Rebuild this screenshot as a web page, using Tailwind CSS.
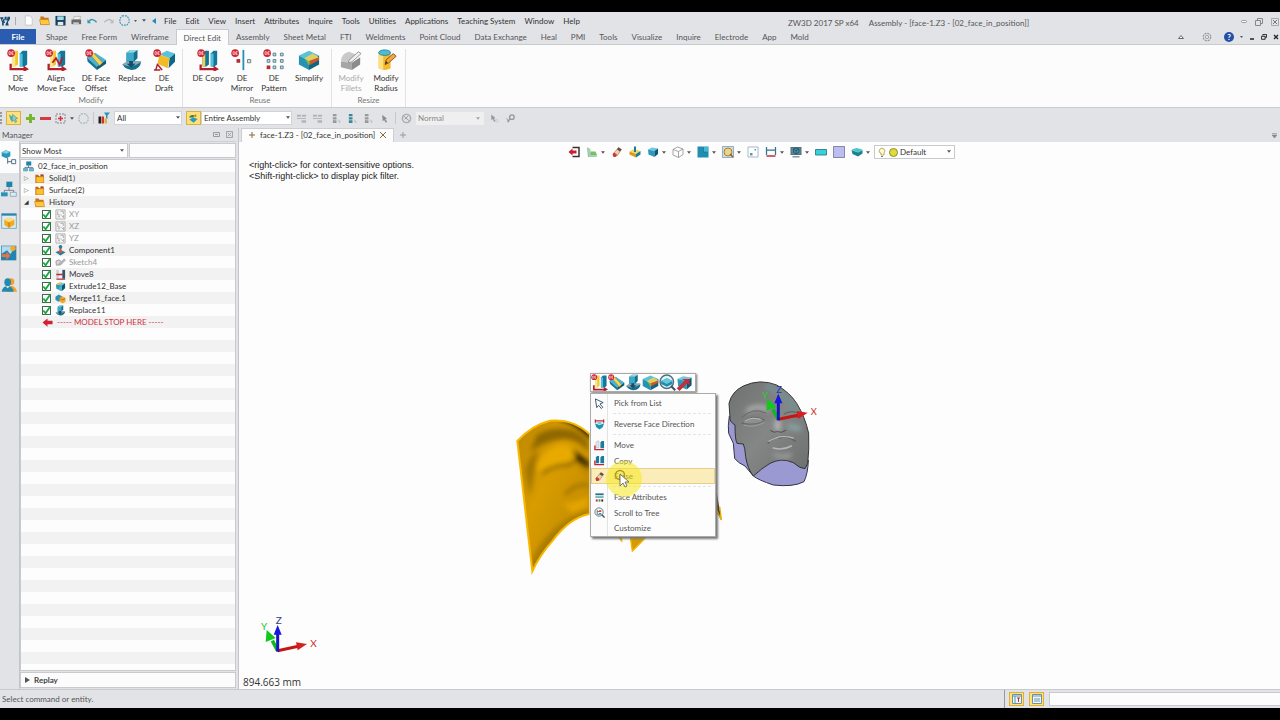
<!DOCTYPE html>
<html lang="en">
<head>
    <meta charset="UTF-8">
    <meta name="viewport" content="width=device-width, initial-scale=1.0">
    <title>ZW3D 2017 SP x64</title>
    <script src="https://cdn.jsdelivr.net/npm/@tailwindcss/browser@4"></script>
</head>
<body class="flex h-screen flex-col overflow-hidden bg-black py-3 font-['Lato',sans-serif] text-[8px] leading-[10px] text-[#333]">

    <!-- Icon set -->
    <svg class="hidden">
        <symbol id="de" viewBox="0 0 10 10"><circle cx="5" cy="5" r="4.6" fill="#cf2030"/><path d="M2.500 3.200v3.600h1q1.300 0 1.300-1.800T3.500 3.200zM8 3.200H6v3.600h2M6 5h1.700" fill="none" stroke="#fff" stroke-width=".8"/></symbol>
        <symbol id="bars" viewBox="0 0 24 24"><path d="M6 5l3-3h3v15l-3 2H6z" fill="#f4c531"/><path d="M6 5h3v14H6z" fill="#ffe68a"/><path d="M14 5l3-3h5v15l-3 2h-5z" fill="#15769b"/><path d="M14 5h3v14h-3z" fill="#4fc0da"/><path d="M4 16v6h14M3 22h16" fill="none" stroke="#b3202c" stroke-width="2.500"/><path d="M18 18l6 4-6 3z" fill="#b3202c"/></symbol>
        <symbol id="move" viewBox="0 0 24 24"><use href="#bars"/><use href="#de" x="0" y="0" width="9" height="9"/></symbol>
        <symbol id="align" viewBox="0 0 24 24"><use href="#bars"/><path d="M8 15l4-5 4 7 3-8" fill="none" stroke="#b3202c" stroke-width="2"/><use href="#de" width="9" height="9"/></symbol>
        <symbol id="copy" viewBox="0 0 24 24"><path d="M6 5l3-3h4v15l-3 2H6z" fill="#15769b"/><path d="M6 5h3v14H6z" fill="#f6d14d"/><path d="M15 5l3-3h4v15l-3 2h-4z" fill="#15769b"/><path d="M15 5h3v14h-3z" fill="#4fc0da"/><path d="M4 17v5h15" fill="none" stroke="#b3202c" stroke-width="2.500"/><path d="M18 18l6 4-6 3z" fill="#b3202c"/><use href="#de" width="9" height="9"/></symbol>
        <symbol id="offset" viewBox="0 0 24 24"><path d="M2 9l9-5 12 8-10 7z" fill="#48b4cf"/><path d="M2 9l11 10v4L3 14z" fill="#137596"/><path d="M13 19l10-7v4l-10 7z" fill="#0d5b79"/><path d="M5 5l4-1 10 11-3 3z" fill="#f8d354" stroke="#b58715" stroke-width=".6"/><use href="#de" width="9" height="9"/></symbol>
        <symbol id="replace" viewBox="0 0 24 24"><path d="M1 17l6-4h15l-4 6-7 4z" fill="#8aa9b5"/><path d="M2 17q9 5 20-3-1 8-10 9-8-1-10-6z" fill="#14708f"/><path d="M6 4l4-3h8v9l-4 4H6z" fill="#136e90"/><path d="M6 4h8v10H6z" fill="#3ca9c9"/><path d="M6 4l4-3h8l-4 3z" fill="#8fd6e6"/><path d="M9 13h4v3h3l-5 4-5-4h3z" fill="#164d63"/></symbol>
        <symbol id="draft" viewBox="0 0 24 24"><path d="M7 6l8-4 9 3-6 5z" fill="#59c3dc"/><path d="M18 10l6-5v9l-7 7z" fill="#0e6687"/><path d="M7 6l11 4-2 11-11-5z" fill="#f3ba28"/><path d="M5 16l-2 7M5 17l5 6M1 23h7" stroke="#b3202c" stroke-width="1.600" fill="none"/><use href="#de" width="9" height="9"/></symbol>
        <symbol id="mirror" viewBox="0 0 24 24"><path d="M13.500 1v22" stroke="#2593b5" stroke-width="2"/><path d="M6 11h4v4H6z" fill="#bd2836"/><path d="M18 11.500h3.500v3.500H18z" fill="#dfe5e8" stroke="#6d7c84"/><use href="#de" width="9" height="9"/></symbol>
        <symbol id="pattern" viewBox="0 0 24 24"><g fill="#b8dfe8" stroke="#4c7382" stroke-width=".9"><path d="M11 4.500h3v3h-3zM19 4.500h3v3h-3zM4.500 11.500h3v3h-3zM11 11.500h3v3h-3zM19 11.500h3v3h-3zM11 18.500h3v3h-3zM19 18.500h3v3h-3z"/></g><path d="M4 18h4v4H4z" fill="#bd2836"/><use href="#de" width="9" height="9"/></symbol>
        <symbol id="simplify" viewBox="0 0 24 24"><path d="M1 7l11-5 11 5-11 6z" fill="#5ac1d8"/><path d="M1 7l11 6v10L1 17z" fill="#2492b2"/><path d="M12 13l11-6v10l-11 6z" fill="#0e6584"/><path d="M7 10l9-5 7 4-10 6z" fill="#e0d063"/><path d="M12 13l11-4v3l-11 6z" fill="#d05728"/><path d="M7 10l6 4-1 4z" fill="#7abf4b"/></symbol>
        <symbol id="fillets" viewBox="0 0 24 24"><path d="M1 14q0-9 9-11l10 4q-6 2-7 8z" fill="#c9c9c9"/><path d="M1 14l12 1v8L1 20z" fill="#a5a5a5"/><path d="M13 15l9-6v8l-9 6z" fill="#8b8b8b"/><path d="M10 12l10-9 3 2L13 14l-4 1z" fill="#efefef" stroke="#858585" stroke-width=".9"/></symbol>
        <symbol id="radius" viewBox="0 0 24 24"><path d="M4 4v17q7 4 13 0V4z" fill="#f5b92b"/><path d="M4 4v17l5 2V5z" fill="#ffe080"/><ellipse cx="10.500" cy="4" rx="6.500" ry="3" fill="#4fbbd6" stroke="#1d83a3"/><path d="M11 17l1-5 8-7 3 3-8 7z" fill="#f6a63a" stroke="#704619" stroke-width=".9"/><path d="M11 17l1-4 2 2z" fill="#333"/></symbol>
        <symbol id="cube" viewBox="0 0 24 24"><path d="M2 7l8-4 12 2-7 5z" fill="#6cc9df"/><path d="M2 7l13 3v12L3 17z" fill="#2b9abb"/><path d="M15 10l7-5v11l-7 6z" fill="#0b5876"/></symbol>
        <symbol id="tree" viewBox="0 0 24 24"><path d="M7 1h11v9H7z" fill="#1c86a8"/><path d="M12 10v5M4 16v-2h17v2" stroke="#557" fill="none" stroke-width="1.600"/><path d="M1 16h9v6H1zM14 16h9v6h-9z" fill="#6fb9cf" stroke="#287e9d"/></symbol>
        <symbol id="folder" viewBox="0 0 24 24"><path d="M3 4h6l2 3h11v15H3z" fill="#c06a16"/><path d="M5 9h16v12H5z" fill="#fcbf2d"/><path d="M14 3h7v4h-7z" fill="#a74025"/></symbol>
        <symbol id="folder-open" viewBox="0 0 24 24"><path d="M3 3h7l2 3h9v15H3z" fill="#c87518"/><path d="M1 10h20l2 11H4z" fill="#fdc940" stroke="#b36713"/></symbol>
        <symbol id="check" viewBox="0 0 24 24"><path d="M5 12l5 6 9-13" fill="none" stroke="#1ea343" stroke-width="4"/></symbol>
        <symbol id="plane" viewBox="0 0 24 24"><path d="M2 2h20v20H2z" fill="#f5f5f5" stroke="#aaa" stroke-width="2"/><path d="M6 5v8h6M12 5h6v6M6 17h5M14 14l5 5v-6" fill="none" stroke="#a5a5a5" stroke-width="2"/></symbol>
        <symbol id="stamp" viewBox="0 0 24 24"><path d="M1 16l11-5 11 5-11 7z" fill="#1c7fa3"/><path d="M9 3h6l-1 9 4 3-6 3-6-3 4-3z" fill="#d3583c"/><circle cx="12" cy="4" r="4" fill="#237fa0"/></symbol>
        <symbol id="sketch" viewBox="0 0 24 24"><path d="M2 9q7-6 12 1T3 18z" fill="#d6d6d6" stroke="#9b9b9b" stroke-width="2"/><path d="M8 16L20 4l3 3-12 11z" fill="#bbb" stroke="#888"/></symbol>
        <symbol id="h-move" viewBox="0 0 24 24"><path d="M3 2h5v18H3z" fill="#c4cdd2"/><path d="M16 2h6v19h-6z" fill="#27586d"/><path d="M3 12h14M3 22h19" stroke="#be2735" stroke-width="3"/></symbol>
        <symbol id="extrude" viewBox="0 0 24 24"><use href="#cube"/><path d="M2 7l8-4 5 1-8 5z" fill="#f4bd33"/><path d="M9 13l6-2v11l-6-2z" fill="#47b5cf"/></symbol>
        <symbol id="merge" viewBox="0 0 24 24"><path d="M1 8l7-5 7 4v8l-7 4-7-4z" fill="#2993b3"/><path d="M10 11l6-4 7 4v8l-6 4-7-4z" fill="#f0a929"/><path d="M12 13l5 2 5-3" stroke="#9d5b15" fill="none" stroke-width="1.500"/></symbol>
        <symbol id="stop" viewBox="0 0 24 24"><path d="M1 12L12 3v5h11v8H12v5z" fill="#d41f35"/></symbol>
        <symbol id="eraser" viewBox="0 0 24 24"><path d="M5 15L15 3l6 4-9 13H7z" fill="#f0cfa6" stroke="#8a532e"/><path d="M3 17l3-4 6 4-3 5H5z" fill="#c63b3b"/><path d="M15 3l6 4-3 4-6-4z" fill="#5a4c49"/></symbol>
        <symbol id="zoomface" viewBox="0 0 24 24"><circle cx="11" cy="11" r="9.500" fill="#e1f2f7" stroke="#50707f" stroke-width="2"/><path d="M3 10l8-4 8 4v4l-8 4-8-4z" fill="#208bab"/><path d="M3 10l8-4 8 4-8 4z" fill="#65c8dd"/><path d="M17 17l6 6" stroke="#3d5664" stroke-width="3"/></symbol>
        <symbol id="facearrow" viewBox="0 0 24 24"><use href="#cube"/><path d="M1 20L12 10 9 7h10v9l-3-3L5 24z" fill="#c52d3b"/></symbol>
        <symbol id="cursor" viewBox="0 0 24 24"><path d="M3 2l17 8-7 3 6 7-3 3-6-7-4 5z" fill="#fff" stroke="#2d4e66" stroke-width="2"/></symbol>
        <symbol id="reverse" viewBox="0 0 24 24"><path d="M3 1v7M21 1v7M3 4h18" stroke="#c42d39" stroke-width="3"/><path d="M2 9l10 4 10-4-3 9-7 5-7-5z" fill="#2092b4"/><path d="M5 8l7-2 7 2-7 4z" fill="#79cadd"/></symbol>
        <symbol id="m-move" viewBox="0 0 24 24"><path d="M4 5l3-3h4v15H4z" fill="#dce3e8" stroke="#999" stroke-width=".7"/><path d="M14 5l3-3h5v16h-8z" fill="#1c7b9e"/><path d="M2 12v9h20" fill="none" stroke="#be2735" stroke-width="3"/></symbol>
        <symbol id="m-copy" viewBox="0 0 24 24"><path d="M4 5l3-3h4v16H4z" fill="#1c7b9e"/><path d="M14 5l3-3h5v16h-8z" fill="#1c7b9e"/><path d="M2 12v9h20" fill="none" stroke="#be2735" stroke-width="3"/></symbol>
        <symbol id="attrs" viewBox="0 0 24 24"><path d="M3 3h18v4H3z" fill="#2d728d"/><path d="M3 9h18v4H3z" fill="#76b2c3"/><path d="M4 16h4v5H4z" fill="#c33"/><path d="M10 16h4v5h-4z" fill="#3a9b48"/><path d="M16 16h4v5h-4z" fill="#333"/></symbol>
        <symbol id="treezoom" viewBox="0 0 24 24"><circle cx="11" cy="11" r="9" fill="#fff" stroke="#5d6c75" stroke-width="2"/><path d="M7 6v10h4M7 10h4" stroke="#5d6c75" stroke-width="2" fill="none"/><path d="M11 7h5v4h-5z" fill="#c74949"/><path d="M11 13h5v4h-5z" fill="#3b95b1"/><path d="M17 17l6 6" stroke="#3d5664" stroke-width="3"/></symbol>
        <symbol id="dashring" viewBox="0 0 24 24"><path d="M7 2h10l5 6v8l-5 6H7l-5-6V8z" fill="none" stroke="currentColor" stroke-width="2.500" stroke-dasharray="4 2"/></symbol>
        <symbol id="caret" viewBox="0 0 6 4"><path d="M0 0h6L3 4z" fill="#555"/></symbol>
        <symbol id="list" viewBox="0 0 24 24"><path d="M4 2h8v5H4zM4 9h8v5H4zM4 16h8v6H4z" fill="currentColor"/><path d="M15 13l7 7-3 0-1 3z" fill="#bbb"/></symbol>
        <symbol id="grid" viewBox="0 0 24 24"><path d="M2 4h9v4H2zM13 4h9v4h-9zM2 11h20v2H2zM12 16h10v5H12z" fill="#b4b5b8"/></symbol>
        <symbol id="triad" viewBox="-55 -110 180 120" overflow="visible">
            <path d="M0 0l-16-30" stroke="#0fb81c" stroke-width="11"/><path d="M-33-62l-3 36 30-12z" fill="#0fc91c"/>
            <path d="M0 0l62-13" stroke="#c41616" stroke-width="9"/><path d="M88-20L55-25l5 24z" fill="#d81f1f"/>
            <path d="M0 3v-54" stroke="#1414c4" stroke-width="9"/><path d="M0-77l-12 29h24z" fill="#1717e0"/>
        </symbol>
    </svg>

    <div class="flex min-h-0 flex-1 flex-col bg-[#e2e3e7]">

        <!-- Title bar -->
        <header class="flex h-[17px] shrink-0 items-center">
            <div class="flex w-[164px] items-center gap-[5px]">
                <svg class="size-[10px]" viewBox="0 0 24 24" aria-label="ZW3D"><path d="M0 3h8v4H4l5 9v7H5V15zM11 2h5v5h-5zM18 2h6v5l-5 8 2 8h-8l1-5 4-8h-8l2 7H8L6 8h11z" fill="#174d75"/></svg>
                <span class="h-2 w-px bg-[#aaa]"></span>
                <button aria-label="New" class="ml-[2px]"><svg class="size-[11px]" viewBox="0 0 24 24"><path d="M5 2h10l5 5v15H5z" fill="#fff" stroke="#bbb" stroke-width="1.500"/></svg></button>
                <button aria-label="Open"><svg class="size-[11px]"><use href="#folder-open"/></svg></button>
                <button aria-label="Save"><svg class="size-[11px]" viewBox="0 0 24 24"><path d="M1 2h22v21H1z" fill="#1c3f59"/><path d="M5 3h14v8H5z" fill="#9fdceb"/><path d="M6 15h12v7H6z" fill="#e1eaee"/></svg></button>
                <button aria-label="Print"><svg class="size-[11px]" viewBox="0 0 24 24"><path d="M7 3h14l-2 7H5z" fill="#eee" stroke="#888"/><path d="M1 10h21v10H1z" fill="#686868"/><path d="M5 16h12v5H5z" fill="#ccc"/></svg></button>
                <button aria-label="Undo"><svg class="size-[11px]" viewBox="0 0 24 24"><path d="M4 14q7-9 17 2" fill="none" stroke="#3996b3" stroke-width="3"/><path d="M1 9v9h8z" fill="#3996b3"/></svg></button>
                <button aria-label="Redo"><svg class="size-[11px]" viewBox="0 0 24 24"><path d="M3 16q10-11 17-2" fill="none" stroke="#b8babd" stroke-width="3"/><path d="M23 9v9h-8z" fill="#b8babd"/></svg></button>
                <button aria-label="Regenerate" class="flex items-center gap-1 text-[#4096b5]"><svg class="size-[11px]"><use href="#dashring"/></svg><svg class="h-[2px] w-[3px]"><use href="#caret"/></svg></button>
                <button aria-label="More"><svg class="h-[3px] w-1"><use href="#caret"/></svg></button>
                <button aria-label="Collapse"><svg class="size-[6px]" viewBox="0 0 6 6"><path d="M5 0v6L1 3z" fill="#2689bd"/></svg></button>
            </div>
            <nav class="flex flex-1 gap-[9px] whitespace-nowrap">
                <a href="#">File</a><a href="#">Edit</a><a href="#">View</a><a href="#">Insert</a><a href="#">Attributes</a><a href="#">Inquire</a><a href="#">Tools</a><a href="#">Utilities</a><a href="#">Applications</a><a href="#">Teaching System</a><a href="#">Window</a><a href="#">Help</a>
            </nav>
            <div class="flex w-[492px] items-center gap-[10px] whitespace-nowrap pt-1 text-[#555]">
                <span>ZW3D 2017 SP x64</span><span class="flex-1">Assembly - [face-1.Z3 - [02_face_in_position]]</span>
                <div class="flex items-center gap-2 pr-px pb-[2px]">
                    <button aria-label="Minimize"><svg class="h-[3px] w-[6px]" viewBox="0 0 6 3"><rect x=".5" y=".5" width="5" height="2" rx="1" fill="#fff" stroke="#999"/></svg></button>
                    <button aria-label="Restore"><svg class="size-2" viewBox="0 0 8 8"><path d="M2.500 2V.5h5v5H6M.5 2.500h5v5h-5z" fill="none" stroke="#888"/></svg></button>
                    <button aria-label="Close"><svg class="size-2" viewBox="0 0 8 8"><path d="M.5.5h7v7h-7z" fill="none" stroke="#aaa"/><path d="M2 2l4 4M6 2L2 6" stroke="#777"/></svg></button>
                </div>
            </div>
        </header>

        <!-- Ribbon tabs -->
        <div class="flex h-4 shrink-0 items-stretch border-b border-[#c9cacc] text-[#555]">
            <nav class="flex flex-1 items-stretch whitespace-nowrap [&>a]:flex [&>a]:items-center [&>a]:px-[7px]">
                <a href="#" class="mr-[3px] w-9 justify-center bg-[#2a5caf] font-bold text-white">File</a>
                <a href="#">Shape</a><a href="#">Free Form</a><a href="#">Wireframe</a>
                <a href="#" class="-mb-px border-x border-t border-[#c9cacc] bg-[#fcfcfc]">Direct Edit</a>
                <a href="#">Assembly</a><a href="#">Sheet Metal</a><a href="#">FTI</a><a href="#">Weldments</a><a href="#">Point Cloud</a><a href="#">Data Exchange</a><a href="#">Heal</a><a href="#">PMI</a><a href="#">Tools</a><a href="#">Visualize</a><a href="#">Inquire</a><a href="#">Electrode</a><a href="#">App</a><a href="#">Mold</a>
            </nav>
            <div class="flex items-center gap-[6px] pr-px">
                <button aria-label="Collapse ribbon" class="mr-3"><svg class="h-1 w-[6px]" viewBox="0 0 6 4"><path d="M.5 3.500L3 .5l2.500 3z" fill="#fff" stroke="#666"/></svg></button>
                <button aria-label="Settings" class="mr-[6px]"><svg class="size-[10px]" viewBox="0 0 24 24"><circle cx="12" cy="12" r="9" fill="none" stroke="#999" stroke-width="3" stroke-dasharray="5 2"/><circle cx="12" cy="12" r="4" fill="none" stroke="#999" stroke-width="2"/></svg></button>
                <button aria-label="Help" class="flex size-[10px] items-center justify-center rounded-full bg-[#2450a6] font-bold text-white">?</button>
                <svg class="h-[2px] w-[3px]"><use href="#caret"/></svg>
                <button aria-label="Minimize document"><svg class="size-[6px]" viewBox="0 0 6 6"><path d="M1 5h4" stroke="#222" stroke-width="1.500"/></svg></button>
                <button aria-label="Restore document"><svg class="size-[6px]" viewBox="0 0 8 8"><path d="M2.500 2V.5h5v4H6M.5 3h5v4h-5z" fill="none" stroke="#222" stroke-width="1.300"/></svg></button>
                <button aria-label="Close document"><svg class="size-[6px]" viewBox="0 0 6 6"><path d="M1 1l4 4M5 1L1 5" stroke="#222" stroke-width="1.300"/></svg></button>
            </div>
        </div>

        <!-- Ribbon -->
        <div class="flex h-[63px] shrink-0 border-b border-[#cbccce] bg-[#fcfcfc] pt-1 text-center [&_button]:flex [&_button]:flex-col [&_button]:items-center [&_button]:gap-[2px] [&_button]:whitespace-nowrap [&_svg]:size-[22px]">
            <section class="flex w-[183px] flex-col justify-between border-r border-[#e2e2e2] pb-[2px]">
                <div class="grid grid-cols-[36px_40px_40px_32px_32px]">
                    <button><svg><use href="#move"/></svg><span>DE<br>Move</span></button>
                    <button><svg><use href="#align"/></svg><span>Align<br>Move Face</span></button>
                    <button><svg><use href="#offset"/></svg><span>DE Face<br>Offset</span></button>
                    <button><svg><use href="#replace"/></svg><span>Replace</span></button>
                    <button><svg><use href="#draft"/></svg><span>DE<br>Draft</span></button>
                </div>
                <h2 class="text-[#777]">Modify</h2>
            </section>
            <section class="flex w-[149px] flex-col justify-between border-r border-[#e2e2e2] pb-[2px] pl-[6px]">
                <div class="grid grid-cols-[38px_30px_34px_36px]">
                    <button><svg><use href="#copy"/></svg><span>DE Copy</span></button>
                    <button><svg><use href="#mirror"/></svg><span>DE<br>Mirror</span></button>
                    <button><svg><use href="#pattern"/></svg><span>DE<br>Pattern</span></button>
                    <button><svg><use href="#simplify"/></svg><span>Simplify</span></button>
                </div>
                <h2 class="text-[#777]">Reuse</h2>
            </section>
            <section class="flex w-[74px] flex-col justify-between border-r border-[#e2e2e2] pb-[2px]">
                <div class="grid grid-cols-[38px_32px]">
                    <button class="text-[#aaa]"><svg><use href="#fillets"/></svg><span>Modify<br>Fillets</span></button>
                    <button><svg><use href="#radius"/></svg><span>Modify<br>Radius</span></button>
                </div>
                <h2 class="text-[#777]">Resize</h2>
            </section>
        </div>

        <!-- Selection toolbar -->
        <div class="flex h-[20px] shrink-0 items-center gap-1">
            <span class="h-3 border-l-2 border-dotted border-[#999]"></span>
            <button aria-label="Pick" class="flex h-[14px] w-[15px] items-center justify-center border border-[#d9b23b] bg-[#ffe07a]"><svg class="size-[11px]" viewBox="0 0 24 24"><path d="M2 3l9 6-4 10z" fill="#45aabb"/><path d="M10 3l11 9-5 1 3 6-3 2-3-6-4 4z" fill="#8fcfc8" stroke="#4d9a8d" stroke-width="1.500"/></svg></button>
            <button aria-label="Add"><svg class="size-[11px]" viewBox="0 0 11 11"><path d="M5.500 1v9M1 5.500h9" stroke="#79b52d" stroke-width="3"/></svg></button>
            <button aria-label="Remove"><svg class="size-[11px]" viewBox="0 0 11 11"><path d="M0 5.500h11" stroke="#d23b44" stroke-width="3"/></svg></button>
            <button aria-label="Pick region" class="flex items-center gap-1"><svg class="size-[11px]" viewBox="0 0 11 11"><path d="M1 1h9v9H1z" fill="none" stroke="#888" stroke-dasharray="2 1"/><path d="M5.500 3v5M3 5.500h5" stroke="#cf3341" stroke-width="1.500"/></svg><svg class="h-[3px] w-1"><use href="#caret"/></svg></button>
            <button aria-label="Loop" class="text-[#a3b4ba]"><svg class="size-[11px]"><use href="#dashring"/></svg></button>
            <span class="h-3 w-px bg-[#c6c7ca]"></span>
            <button aria-label="Filter"><svg class="size-[12px]" viewBox="0 0 24 24"><path d="M1 9h5v14H1z" fill="#222"/><path d="M7 9h5v14H7z" fill="#c73929"/><path d="M13 13h5v10h-5z" fill="#e5b13a"/><path d="M12 1h12l-5 6v7l-3-2V7z" fill="#2c94b8"/></svg></button>
            <div class="relative w-[68px]"><select aria-label="Filter type" class="block h-[14px] w-full appearance-none border border-[#d2d3d6] bg-white px-[2px] leading-3"><option>All</option></select><svg class="pointer-events-none absolute top-[5px] right-[2px] h-[3px] w-1"><use href="#caret"/></svg></div>
            <button aria-label="Scope" class="flex h-[14px] w-[15px] items-center justify-center border border-[#d9b23b] bg-[#ffe07a]"><svg class="size-[11px]" viewBox="0 0 24 24"><path d="M3 14l8-4 10 3-9 8z" fill="#2b9aba"/><path d="M2 10q2-8 12-5l-2 5z" fill="#337d57"/><path d="M18 2v8l-7-4z" fill="#cf8321"/></svg></button>
            <div class="relative -ml-1 w-[91px]"><select aria-label="Pick scope" class="block h-[14px] w-full appearance-none border border-[#d2d3d6] bg-white px-[2px] leading-3"><option>Entire Assembly</option></select><svg class="pointer-events-none absolute top-[5px] right-[2px] h-[3px] w-1"><use href="#caret"/></svg></div>
            <div class="flex items-center gap-[5px]">
                <svg class="size-[11px]"><use href="#grid"/></svg>
                <svg class="mr-[3px] size-[11px]"><use href="#grid"/></svg>
                <svg class="size-[11px] text-[#999]"><use href="#list"/></svg>
                <svg class="size-[11px] text-[#3a8998]"><use href="#list"/></svg>
                <svg class="size-[11px] text-[#999]"><use href="#list"/></svg>
                <svg class="size-[11px]" viewBox="0 0 24 24"><path d="M7 4l10 8-3 2 4 5-3 2-4-6-3 3z" fill="#8b8c8e"/></svg>
                <span class="h-3 w-px bg-[#c6c7ca]"></span>
                <svg class="size-[11px]" viewBox="0 0 24 24"><circle cx="12" cy="12" r="9" fill="none" stroke="#aaa" stroke-width="3"/><path d="M5 6l14 12M8 14l8-8" stroke="#999" stroke-width="2"/></svg>
                <div class="relative -ml-px w-[68px]"><select aria-label="Mode" disabled class="block h-[13px] w-full appearance-none bg-[#efeff0] px-[2px] leading-3 text-[#888]"><option>Normal</option></select><svg class="pointer-events-none absolute top-[5px] right-1 h-[3px] w-1 opacity-50"><use href="#caret"/></svg></div>
                <svg class="size-[11px]" viewBox="0 0 24 24"><path d="M5 3l9 8-3 1 3 6-3 1-3-6-3 3z" fill="#999"/><circle cx="17" cy="17" r="3" fill="#ddd" stroke="#bbb"/></svg>
                <svg class="size-[11px]" viewBox="0 0 24 24"><path d="M2 10l7 5-2 6z" fill="#aaa"/><circle cx="15" cy="9" r="5" fill="none" stroke="#999" stroke-width="3"/><path d="M11 13l-5 7" stroke="#999" stroke-width="3"/></svg>
            </div>
        </div>

        <div class="flex min-h-0 flex-1">

            <!-- Manager panel -->
            <aside class="flex w-[236px] shrink-0 flex-col">
                <div class="flex h-[14px] shrink-0 items-center gap-[6px] border-b border-[#cfd0d3] pr-[3px] pl-[2px]">
                    <h2 class="flex-1 text-[#555]">Manager</h2>
                    <button aria-label="Pin"><svg class="h-[5px] w-[7px]" viewBox="0 0 7 5"><path d="M.5.5h6v4h-6zM2 2.500h3" fill="none" stroke="#999"/></svg></button>
                    <button aria-label="Close panel"><svg class="size-[7px]" viewBox="0 0 8 8"><path d="M.5.5h7v7h-7zM2 2l4 4M6 2L2 6" fill="none" stroke="#999"/></svg></button>
                </div>
                <div class="flex min-h-0 flex-1">
                    <nav class="flex w-[19px] shrink-0 flex-col [&>button]:flex [&>button]:h-8 [&>button]:items-center [&>button]:pl-px">
                        <button aria-label="History" class="-mt-px bg-[#fcfcfc]"><svg class="size-4" viewBox="0 0 24 24"><path d="M1 5l6-3 7 2v7l-6 3-7-3z" fill="#2798bb"/><path d="M1 5l6-3 7 2-6 3z" fill="#83d2e4"/><path d="M10 13v9M10 19h6" fill="none" stroke="#526f80" stroke-width="1.500"/><path d="M16 16h6v6h-6z" fill="#fff" stroke="#526f80" stroke-width="1.500"/></svg></button>
                        <button aria-label="Assembly tree"><svg class="size-4" viewBox="0 0 24 24"><path d="M8 1h9v8H8z" fill="#1c86a8"/><path d="M12 9v5M5 17v-3h14v3" stroke="#557" fill="none"/><path d="M0 17h10v6H0z" fill="#2496b8"/><path d="M14 17h9v6h-9z" fill="#dcecf2" stroke="#6a99ad"/></svg></button>
                        <button aria-label="View manager"><svg class="size-4" viewBox="0 0 24 24"><path d="M1 1h22v22H1z" fill="#dcecf5" stroke="#4c8eb1"/><path d="M1 1h22v3H1z" fill="#2d83ad"/><path d="M5 10l7-3 8 3v8l-8 4-7-4z" fill="#f3a91f"/><path d="M5 10l7-3 8 3-8 4z" fill="#ffdf7b"/><path d="M12 14v8" stroke="#9d6111"/></svg></button>
                        <button aria-label="Visual manager"><svg class="size-4" viewBox="0 0 24 24"><path d="M0 1h23v22H0z" fill="#2583b3"/><path d="M1 2h21l-8 12-5-6-8 5z" fill="#b5dbeb"/><circle cx="18" cy="5" r="4" fill="#f4a824"/><path d="M1 14h7v-4l6 6-6 6v-4H1z" fill="#e77542"/></svg></button>
                        <button aria-label="Roles"><svg class="size-4" viewBox="0 0 24 24"><circle cx="15" cy="7" r="5" fill="#f0a323"/><path d="M9 22q0-8 7-9 7 2 8 9z" fill="#f0a323"/><ellipse cx="10" cy="8" rx="5" ry="6" fill="#2389b0"/><path d="M1 22q1-6 6-8h6q5 2 6 8z" fill="#2389b0"/><path d="M7 14l3 3 3-3z" fill="#eee"/></svg></button>
                    </nav>
                    <div class="flex min-w-0 flex-1 flex-col border-l border-[#c4c5c8]">
                        <div class="flex h-[17px] shrink-0 items-center gap-px">
                            <div class="relative w-[108px]"><select aria-label="Show" class="block h-[15px] w-full appearance-none border border-[#c9cacd] bg-white px-px leading-3"><option>Show Most</option></select><svg class="pointer-events-none absolute top-[6px] right-1 h-[3px] w-1"><use href="#caret"/></svg></div>
                            <input aria-label="Search" class="h-[15px] min-w-0 flex-1 border border-[#c9cacd] bg-[#fcfcfc]">
                        </div>
                        <ul class="min-h-0 flex-1 overflow-hidden border border-[#c9cacd] bg-[repeating-linear-gradient(#fdfdfd_0_12px,#f2f2f3_12px_24px)] whitespace-nowrap [&_li]:flex [&_li]:h-3 [&_li]:items-center [&_svg]:size-[11px] [&_svg]:shrink-0">
                            <li class="gap-1 pl-[2px]"><svg><use href="#tree"/></svg>02_face_in_position</li>
                            <li class="gap-1 pl-[3px]"><span class="w-[6px] text-[6px] text-[#666]">▷</span><svg><use href="#folder"/></svg>Solid(1)</li>
                            <li class="gap-1 pl-[3px]"><span class="w-[6px] text-[6px] text-[#666]">▷</span><svg><use href="#folder"/></svg>Surface(2)</li>
                            <li class="gap-1 pl-[3px]"><span class="w-[6px] text-[6px]">◢</span><svg><use href="#folder-open"/></svg>History</li>
                            <li class="gap-[3px] pl-[21px] text-[#999]"><label class="contents"><input type="checkbox" checked class="peer sr-only"><span class="flex size-[9px] items-center justify-center border border-[#3f6b4a] bg-white"><svg><use href="#check"/></svg></span><svg class="ml-px"><use href="#plane"/></svg>XY</label></li>
                            <li class="gap-[3px] pl-[21px] text-[#999]"><label class="contents"><input type="checkbox" checked class="peer sr-only"><span class="flex size-[9px] items-center justify-center border border-[#3f6b4a] bg-white"><svg><use href="#check"/></svg></span><svg class="ml-px"><use href="#plane"/></svg>XZ</label></li>
                            <li class="gap-[3px] pl-[21px] text-[#999]"><label class="contents"><input type="checkbox" checked class="peer sr-only"><span class="flex size-[9px] items-center justify-center border border-[#3f6b4a] bg-white"><svg><use href="#check"/></svg></span><svg class="ml-px"><use href="#plane"/></svg>YZ</label></li>
                            <li class="gap-[3px] pl-[21px]"><label class="contents"><input type="checkbox" checked class="peer sr-only"><span class="flex size-[9px] items-center justify-center border border-[#3f6b4a] bg-white"><svg><use href="#check"/></svg></span><svg class="ml-px"><use href="#stamp"/></svg>Component1</label></li>
                            <li class="gap-[3px] pl-[21px] text-[#999]"><label class="contents"><input type="checkbox" checked class="peer sr-only"><span class="flex size-[9px] items-center justify-center border border-[#3f6b4a] bg-white"><svg><use href="#check"/></svg></span><svg class="ml-px"><use href="#sketch"/></svg>Sketch4</label></li>
                            <li class="gap-[3px] pl-[21px]"><label class="contents"><input type="checkbox" checked class="peer sr-only"><span class="flex size-[9px] items-center justify-center border border-[#3f6b4a] bg-white"><svg><use href="#check"/></svg></span><svg class="ml-px"><use href="#h-move"/></svg>Move8</label></li>
                            <li class="gap-[3px] pl-[21px]"><label class="contents"><input type="checkbox" checked class="peer sr-only"><span class="flex size-[9px] items-center justify-center border border-[#3f6b4a] bg-white"><svg><use href="#check"/></svg></span><svg class="ml-px"><use href="#extrude"/></svg>Extrude12_Base</label></li>
                            <li class="gap-[3px] pl-[21px]"><label class="contents"><input type="checkbox" checked class="peer sr-only"><span class="flex size-[9px] items-center justify-center border border-[#3f6b4a] bg-white"><svg><use href="#check"/></svg></span><svg class="ml-px"><use href="#merge"/></svg>Merge11_face.1</label></li>
                            <li class="gap-[3px] pl-[21px]"><label class="contents"><input type="checkbox" checked class="peer sr-only"><span class="flex size-[9px] items-center justify-center border border-[#3f6b4a] bg-white"><svg><use href="#check"/></svg></span><svg class="ml-px"><use href="#replace"/></svg>Replace11</label></li>
                            <li class="gap-1 pl-[21px] text-[#cf3342]"><svg><use href="#stop"/></svg>----- MODEL STOP HERE -----</li>
                        </ul>
                        <button class="mt-px mb-px flex h-4 shrink-0 items-center gap-1 border border-[#c9cacd] bg-[#fcfcfc] pl-1 font-bold text-[#444]"><svg class="h-[6px] w-[5px]" viewBox="0 0 5 6"><path d="M0 0l5 3-5 3z" fill="#555"/></svg>Replay</button>
                    </div>
                </div>
            </aside>

            <!-- Document area -->
            <main class="ml-[2px] flex min-w-0 flex-1 flex-col border-l border-[#c4c5c8]">
                <div class="flex h-[14px] shrink-0 items-center pl-[2px]">
                    <div class="flex h-full items-center gap-[5px] border-x border-t border-[#cdced1] bg-[#fcfcfc] px-[7px] pb-px whitespace-nowrap">
                        <svg class="size-[6px]" viewBox="0 0 6 6"><path d="M3 0v6M0 3h6" stroke="#8a6a3c"/></svg>
                        <span>face-1.Z3 - [02_face_in_position]</span>
                        <button aria-label="Close tab"><svg class="size-[6px]" viewBox="0 0 6 6"><path d="M0 0l6 6M6 0L0 6" stroke="#8a6a3c"/></svg></button>
                    </div>
                    <button aria-label="New tab" class="ml-[6px] flex-1"><svg class="size-[6px]" viewBox="0 0 6 6"><path d="M3 0v6M0 3h6" stroke="#999"/></svg></button>
                    <button aria-label="Tab list" class="pr-[3px]"><svg class="size-[5px]" viewBox="0 0 5 5"><path d="M0 .5h5M0 2h5L2.500 5z" fill="#888" stroke="#888" stroke-width=".6"/></svg></button>
                </div>

                <div class="relative min-h-0 flex-1 overflow-hidden bg-[#fdfdfd]">
                    <!-- View toolbar -->
                    <div class="flex items-center gap-[6px] pt-[3px] pl-[329px] [&>svg]:size-[12px] [&>span]:flex [&>span]:items-center [&>span]:gap-[3px]">
                        <svg viewBox="0 0 24 24"><path d="M9 3h13v18H9" fill="#fff" stroke="#333" stroke-width="3"/><path d="M1 12l8-7v4h8v6H9v4z" fill="#c71f31"/></svg>
                        <span><svg class="size-[12px]" viewBox="0 0 24 24"><path d="M2 3l5 2v14h14v3H4z" fill="#9aaeb6"/><path d="M2 3l7 4v6l12 3v6H6z" fill="#9ed3b4"/><path d="M9 11h10l3 7H9z" fill="#7ebd62"/></svg><svg class="h-[3px] w-1"><use href="#caret"/></svg></span>
                        <svg><use href="#eraser"/></svg>
                        <svg viewBox="0 0 24 24"><path d="M1 11l9-5 13 4-9 6z" fill="#f3d65b"/><path d="M1 11l13 5v7L1 17z" fill="#d69a20"/><path d="M14 16l9-6v7l-9 6z" fill="#197c9f"/><path d="M12 1v11" stroke="#197c9f" stroke-width="4"/></svg>
                        <span><svg class="size-[12px]"><use href="#cube"/></svg><svg class="h-[3px] w-1"><use href="#caret"/></svg></span>
                        <span><svg class="size-[12px]" viewBox="0 0 24 24"><path d="M2 7l9-5 11 4v11l-9 6-11-5zM2 7l11 4 9-5M13 11v12" fill="none" stroke="#888" stroke-width="1.500"/></svg><svg class="h-[3px] w-1"><use href="#caret"/></svg></span>
                        <span><svg class="size-[12px]" viewBox="0 0 24 24"><path d="M1 1h22v22H1z" fill="#1f8eb1"/><path d="M13 2h9v10h-9z" fill="#43b9d4"/><path d="M13 2v10h9" fill="none" stroke="#116784"/></svg><svg class="h-[3px] w-1"><use href="#caret"/></svg></span>
                        <span><svg class="size-[12px]" viewBox="0 0 24 24"><path d="M1 1h22v22H1z" fill="#cfdde2" stroke="#7c99a5" stroke-width="1.500"/><circle cx="12" cy="12" r="8" fill="#ecd28d" stroke="#a8843f" stroke-width="2"/><path d="M16 16l6 6" stroke="#955c27" stroke-width="3"/></svg><svg class="h-[3px] w-1"><use href="#caret"/></svg></span>
                        <svg viewBox="0 0 24 24"><path d="M2 2h20v20H2z" fill="#fff" stroke="#86a6b2" stroke-width="1.500"/><path d="M6 14h5v5H6zM15 6h3v3h-3z" fill="#5c97ac"/></svg>
                        <span><svg class="size-[12px]" viewBox="0 0 24 24"><path d="M3 2v16M21 2v16M3 8h18" fill="none" stroke="#34748c" stroke-width="2.500"/><path d="M3 20h18" stroke="#c72b3c" stroke-width="3"/></svg><svg class="h-[3px] w-1"><use href="#caret"/></svg></span>
                        <span><svg class="size-[12px]" viewBox="0 0 24 24"><path d="M1 2h22v16H1z" fill="#526e7b"/><path d="M3 4h18v12H3z" fill="#62899a"/><path d="M5 20h14v3H5z" fill="#8a9398"/><path d="M7 6l5-2 6 2v7l-6 3-5-3zM7 6l5 3 6-3M12 9v7" fill="#3491b1" stroke="#244d61" stroke-width="1.500"/></svg><svg class="h-[3px] w-1"><use href="#caret"/></svg></span>
                        <svg viewBox="0 0 24 24"><path d="M1 7h22v11H1z" fill="#31d3df" stroke="#27616f" stroke-width="1.500"/></svg>
                        <svg viewBox="0 0 24 24"><path d="M1 1h22v22H1z" fill="#bdbcf3" stroke="#696987" stroke-width="1.500"/></svg>
                        <span><svg class="size-[12px]" viewBox="0 0 24 24"><path d="M1 7l10-3 12 3-9 6z" fill="#49c4cb"/><path d="M1 8l13 5 9-5v7l-9 6-11-5z" fill="#16858f"/></svg><svg class="h-[3px] w-1"><use href="#caret"/></svg></span>
                        <div class="relative -ml-[2px] w-[81px]">
                            <select aria-label="Layer" class="block h-[14px] w-full appearance-none border border-[#c9cacd] bg-white pl-[25px] leading-3"><option>Default</option></select>
                            <svg class="pointer-events-none absolute top-[2px] left-1 h-[10px] w-5" viewBox="0 0 20 10"><path d="M2 6Q0 4 2 2t4 0 0 4v2H3V6z" fill="#fffbd0" stroke="#a79b46" stroke-width=".8"/><path d="M3 9.500h2" stroke="#777"/><circle cx="15.500" cy="5.500" r="4" fill="#dfdc35" stroke="#8b8b33"/></svg>
                            <svg class="pointer-events-none absolute top-[5px] right-1 h-[3px] w-1"><use href="#caret"/></svg>
                        </div>
                    </div>

                    <p class="pt-px pl-[10px] font-['Liberation_Sans',sans-serif] text-[9px] leading-[11px] text-[#222]">&lt;right-click&gt; for context-sensitive options.<br>&lt;Shift-right-click&gt; to display pick filter.</p>

                    <!-- Model -->
                    <svg class="absolute top-[218px] left-[261px] h-[220px] w-[340px]" viewBox="0 0 1020 660">
                        <defs>
                            <linearGradient id="gold" x1="0" y1="0" x2="1" y2="1"><stop offset="0" stop-color="#bd8700"/><stop offset=".4" stop-color="#d89c00"/><stop offset="1" stop-color="#b98500"/></linearGradient>
                            <linearGradient id="skin" x1="0" y1="0" x2="1" y2="1"><stop offset="0" stop-color="#6f7070"/><stop offset=".5" stop-color="#858786"/><stop offset="1" stop-color="#6c6e6e"/></linearGradient>
                            <filter id="soft" x="-30%" y="-30%" width="160%" height="160%"><feGaussianBlur stdDeviation="8"/></filter>
                            <filter id="soft2" x="-30%" y="-30%" width="160%" height="160%"><feGaussianBlur stdDeviation="2"/></filter>
                            <clipPath id="goldclip"><path d="M52 243Q95 196 150 182q60-8 118 40v240q-60 12-110 80-40 50-61 92z"/></clipPath>
                            <clipPath id="skinclip"><path d="M687 130Q695 95 730 78 780 55 830 75q40 23 60 55 25 40 36 90 2 50-3 90l-8 16q-15 0-35-18-35-16-70 2-25 15-50 38-18-23-23-58-2-28-7-38l-19-2q-6-10-6-55-17-10-15-23z"/></clipPath>
                        </defs>
                        <path d="M52 243Q95 196 150 182q60-8 118 40v240q-60 12-110 80-40 50-61 92z" fill="url(#gold)"/>
                        <g clip-path="url(#goldclip)"><g filter="url(#soft)">
                            <path d="M175 180q50 10 100 62v-42l-50-30z" fill="#2e2100"/>
                            <path d="M110 225q50-30 110-15 30 15 45 40v25q-30-40-80-38-50 5-95 38z" fill="#8f6700"/>
                            <path d="M75 330q10-40 40-60l-15 80-10 60z" fill="#a27500"/>
                            <path d="M110 320q15-50 70-65 40 0 48 25-10 25-50 32-35 5-60 30z" fill="#e8aa00"/>
                            <path d="M125 340q40-28 75-25 25-5 40-30" fill="none" stroke="#8a6300" stroke-width="9"/>
                            <path d="M216 266l52 44v32l-30-25z" fill="#0d0a00"/>
                            <path d="M225 300l30 50 15 40v-60z" fill="#c28b00"/>
                            <path d="M195 405q35-40 73-28" fill="none" stroke="#a17400" stroke-width="10"/>
                            <path d="M190 430q40 0 75-25v35l-50 20z" fill="#e3a400"/>
                            <path d="M95 600q50-110 170-150v30L100 650z" fill="#a97b00"/>
                        </g></g>
                        <path d="M268 222Q220 176 150 182 95 196 52 243l45 391q20-46 61-92 50-68 110-80" fill="none" stroke="#f8b800" stroke-width="6"/>
                        <path d="M390 525l7 48 48-48zM350 525l15 18v-18z" fill="#d79a00" stroke="#f5b300" stroke-width="4"/>
                        <path d="M650 395l14 85-14-22z" fill="#392c05"/><path d="M650 450l14 30-5-40" fill="none" stroke="#e5a900" stroke-width="4"/>

                        <path d="M688 168q-5 32-2 52l14 30q2 25 4 45 8 13 31 23l25 30q15 12 60 27 60 7 92-10 12-25 13-65l-80-50-125-60z" fill="#9a99d2" stroke="#33334a" stroke-width="3"/>
                        <path d="M687 130Q695 95 730 78 780 55 830 75q40 23 60 55 25 40 36 90 2 50-3 90l-8 16q-15 0-35-18-35-16-70 2-25 15-50 38-18-23-23-58-2-28-7-38l-19-2q-6-10-6-55-17-10-15-23z" fill="url(#skin)" stroke="#333" stroke-width="3"/>
                        <g clip-path="url(#skinclip)" fill="none" stroke-linecap="round">
                            <g filter="url(#soft)"><path d="M805 80q60 25 85 80" stroke="#748f92" stroke-width="18"/><path d="M742 152q25-18 60-5" stroke="#b5b7b6" stroke-width="11"/><path d="M833 185v22" stroke="#c0c2c1" stroke-width="14"/><path d="M870 200l25 5" stroke="#86a1a3" stroke-width="18"/><path d="M825 285q20 10 45 0" stroke="#aaacab" stroke-width="9"/></g>
                            <g filter="url(#soft2)"><path d="M726 190q28-32 68-10-20 18-68 10z" fill="#8e908f" stroke="#666868" stroke-width="3"/><path d="M735 183q20-14 46-5" stroke="#b9bbba" stroke-width="3"/><path d="M732 196q30 8 60-8" stroke="#a9abaa" stroke-width="2"/><path d="M804 250q18-24 36-16 22-8 46 10" stroke="#5f6161" stroke-width="4"/><path d="M807 244q30-22 72-10" stroke="#b4b6b5" stroke-width="4"/><path d="M820 264q28 8 54-6" stroke="#b6b8b7" stroke-width="5"/><path d="M812 212q10 8 20 3 12 6 26-4" stroke="#4d4f4f" stroke-width="3"/><path d="M725 172q35-32 72-13" stroke="#666" stroke-width="3"/><path d="M852 162q20-13 46-2M858 172q18-6 38 0" stroke="#5b5d5d" stroke-width="3"/></g>
                        </g>
                        <use href="#triad" x="780" y="68" width="180" height="120"/>
                        <g class="text-[28px]"><text x="932" y="164" fill="#d32626">X</text><text x="829" y="100" fill="#3030b5">Z</text><text x="787" y="116" fill="#1fd32a">Y</text></g>
                    </svg>

                    <!-- Mini toolbar -->
                    <div class="absolute top-[231px] left-[351px] flex h-[19px] w-[106px] items-center border border-[#aaa] bg-white shadow-[1px_1px_2px_#777] [&_svg]:size-[17px]">
                        <button aria-label="DE Move"><svg><use href="#move"/></svg></button><button aria-label="DE Face Offset"><svg><use href="#offset"/></svg></button><button aria-label="Replace"><svg><use href="#replace"/></svg></button><button aria-label="Simplify"><svg><use href="#simplify"/></svg></button><button aria-label="Zoom to face"><svg><use href="#zoomface"/></svg></button><button aria-label="Align view"><svg><use href="#facearrow"/></svg></button>
                    </div>

                    <!-- Context menu -->
                    <div role="menu" class="absolute top-[251px] left-[351px] flex w-[126px] flex-col border border-[#aaa] bg-[linear-gradient(90deg,#fcfcfc_0_16px,#e3e3e3_16px_17px,#fdfdfd_17px)] py-px whitespace-nowrap text-[#555] shadow-[2px_2px_2px_#777] [&>button]:flex [&>button]:items-center [&>button]:gap-[9px] [&>button]:border [&>button]:border-transparent [&>button]:pl-[2px] [&>button]:text-left [&>hr]:my-[2px] [&>hr]:ml-[22px] [&>hr]:mr-1 [&>hr]:border-dashed [&>hr]:border-[#e4e4e4] [&_svg]:size-[11px]">
                        <button role="menuitem" class="h-4"><svg><use href="#cursor"/></svg>Pick from List</button>
                        <hr>
                        <button role="menuitem" class="h-4"><svg><use href="#reverse"/></svg>Reverse Face Direction</button>
                        <hr>
                        <button role="menuitem" class="h-4"><svg><use href="#m-move"/></svg>Move</button>
                        <button role="menuitem" class="h-[15px]"><svg><use href="#m-copy"/></svg>Copy</button>
                        <button role="menuitem" class="h-4 !border-[#e6cf8b] bg-[#fbedb9]"><svg><use href="#eraser"/></svg>Erase</button>
                        <hr>
                        <button role="menuitem" class="h-4"><svg><use href="#attrs"/></svg>Face Attributes</button>
                        <button role="menuitem" class="h-[15px]"><svg><use href="#treezoom"/></svg>Scroll to Tree</button>
                        <button role="menuitem" class="h-[15px] !pl-[22px]">Customize</button>
                    </div>

                    <!-- Pointer with click halo -->
                    <svg class="pointer-events-none absolute top-[318px] left-[366px] size-[38px]" viewBox="0 0 38 38"><circle cx="19" cy="19" r="18" fill="#f5e71e" fill-opacity=".55"/><circle cx="15" cy="15" r="4.500" fill="none" stroke="#b59a20" stroke-width="1.500"/><path d="M15 14v12l3-3 2 4 2-1-2-4h4z" fill="#fff" stroke="#555" stroke-width=".8"/></svg>

                    <!-- Axis triad -->
                    <svg class="absolute bottom-[35px] left-[17px] h-10 w-[64px]" viewBox="-65 -110 192 120">
                        <use href="#triad" x="-55" y="-110" width="180" height="120"/>
                        <g class="text-[30px]"><text x="98" y="-10" fill="#d32626">X</text><text x="-6" y="-80" fill="#3a3a8a">Z</text><text x="-50" y="-62" fill="#25c52f">Y</text></g>
                    </svg>
                    <p class="absolute bottom-[2px] left-1 font-['Open_Sans',sans-serif] text-[10px] text-[#333]">894.663 mm</p>
                </div>
            </main>
        </div>

        <!-- Status bar -->
        <footer class="flex h-[19px] shrink-0 items-center border-t border-[#c9cacc] text-[#555]">
            <p class="flex-1 pl-[2px]">Select command or entity.</p>
            <div class="flex h-full w-[276px] items-center gap-[5px] border-l border-[#999] pl-1">
                <button aria-label="Text window" class="flex h-[14px] w-[15px] items-center justify-center border border-[#d9b23b] bg-[#ffe07a]"><svg class="size-[10px]" viewBox="0 0 10 10"><path d="M.5.5h9v9h-9z" fill="#eef5f8" stroke="#70909e"/><path d="M1 2h8M3 2v7" stroke="#4d9ab5"/><path d="M5 4h3M6.500 4v4" stroke="#b33"/></svg></button>
                <button aria-label="Output window" class="flex h-[14px] w-[15px] items-center justify-center border border-[#d9b23b] bg-[#ffe07a]"><svg class="size-[10px]" viewBox="0 0 10 10"><path d="M.5.5h9v9h-9z" fill="#eef5f8" stroke="#70909e"/><path d="M1 2h8M2 5h6M2 7h6" stroke="#6c97a9"/></svg></button>
                <input aria-label="Command" class="h-[14px] min-w-0 flex-1 border-y border-l border-[#c9cacd] bg-[#fcfcfc]">
            </div>
        </footer>
    </div>
</body>
</html>
